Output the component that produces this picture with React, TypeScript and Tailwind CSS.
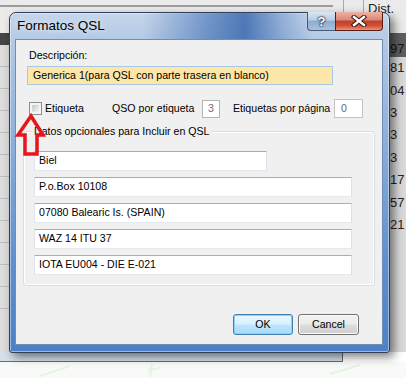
import React from "react";

// Win7 style text box
const Field = ({ value, className }: { value: string; className: string }) => (
  <div
    className={
      "h-[20px] flex items-center pl-[4px] bg-white border border-[#abadb3] border-l-[#e2e3ea] border-r-[#dbdfe6] border-b-[#e3e9ef] whitespace-nowrap " +
      className
    }
  >
    {value}
  </div>
);

const listRows = ["81", "04", "3", "3", "3", "17", "57", "21", "", "", "", ""];

const Backdrop = () => (
  <div className="flex flex-col w-[406px] h-[378px]">
    {/* toolbar + header */}
    <div className="flex h-[33px] bg-[#ebebeb]">
      <div className="w-[343px] pt-[5px]">
        <div className="h-[2px] w-[333px] bg-[#9c9c9c]" />
      </div>
      <div className="w-[20px] border-l border-[#a8a8a8]" />
      <div className="flex-1 border-l border-[#a8a8a8] pl-[4px] pt-[2px] text-[13px] leading-[14px] text-[#1d1d1d]">
        Dist.
      </div>
    </div>
    {/* list area */}
    <div className="flex h-[319px]">
      <div className="w-[390px] flex flex-col bg-[#dcdcdc]">
        <div className="h-[12px] bg-[#454545]" />
        {listRows.map((_, i) => (
          <div key={i} className="h-[22px] border-b border-[#bdbdbd]" />
        ))}
      </div>
      <div className="flex-1 flex flex-col bg-[#d9d9d9] text-[13px] text-[#2a2020]">
        <div className="h-[24px] bg-[#5e5e5e] flex items-end leading-[14px] pb-[1px] text-[#151515]">97</div>
        {listRows.map((v, i) => (
          <div key={i} className="h-[22.4px] flex items-center leading-[14px]">
            {v}
          </div>
        ))}
      </div>
    </div>
    {/* status strip */}
    <div className="h-[10px] w-[343px] bg-[#d6dfea] border-b border-r border-[#6c6c6c]" />
    <div className="flex-1 bg-[#f8faf7]">
      <svg width="406" height="16" className="block">
        <path d="M40 14 L70 4 M150 15 L152 2 M148 8 L160 6 M330 12 L360 3" stroke="#e8f2e4" strokeWidth="2" fill="none" />
      </svg>
    </div>
  </div>
);

const TitleBar = () => (
  <div className="flex h-[27px] bg-[linear-gradient(90deg,rgba(0,0,0,0)_0%,rgba(0,0,0,0)_35%,rgba(50,100,175,0.55)_52%,rgba(40,90,165,0.75)_62%,rgba(60,110,180,0.35)_72%,rgba(0,0,0,0)_80%)]">
    <div className="pl-[7px] flex items-center text-[13.5px] text-black [text-shadow:0_0_6px_rgba(255,255,255,0.9)]">
      Formatos QSL
    </div>
    <div className="ml-auto mr-[6px] -mt-px flex h-[19px] self-start">
      <div className="w-[28px] h-[19px] rounded-bl-[4px] border border-[#4a5a70] border-t-0 border-r-0 bg-[linear-gradient(180deg,#dbe6f2_0%,#b9cce3_45%,#8fabcf_52%,#a6c1e2_100%)] flex items-center justify-center text-white font-bold text-[13px] leading-none [text-shadow:0_0_1px_#1a2a40,0_0_2px_#1a2a40,0_0_2px_#1a2a40]">
        ?
      </div>
      <div className="w-[48px] h-[19px] rounded-br-[4px] border border-[#5a1e16] border-t-0 bg-[linear-gradient(180deg,#eeb3a5_0%,#db8a78_42%,#c4412c_52%,#cf4f38_75%,#e99272_100%)] flex items-center justify-center">
        <svg width="16" height="12" viewBox="0 0 16 12">
          <path d="M3 2 L13 10 M13 2 L3 10" stroke="#3a1410" strokeWidth="4.4" strokeLinecap="square" />
          <path d="M3 2 L13 10 M13 2 L3 10" stroke="#ffffff" strokeWidth="2.4" strokeLinecap="square" />
        </svg>
      </div>
    </div>
  </div>
);

const Button = ({ label, primary }: { label: string; primary?: boolean }) => (
  <div
    className={
      primary
        ? "w-[60px] h-[21px] rounded-[3px] border border-[#3c7fb1] bg-[linear-gradient(180deg,#eaf6fd_0%,#d9f0fc_48%,#bee6fd_52%,#a7d9f5_100%)] shadow-[inset_0_0_0_1px_#8fd3f8] flex items-center justify-center"
        : "w-[61px] h-[21px] rounded-[3px] border border-[#707070] bg-[linear-gradient(180deg,#f2f2f2_0%,#ebebeb_48%,#dddddd_52%,#cfcfcf_100%)] shadow-[inset_0_0_0_1px_#fcfcfc] flex items-center justify-center"
    }
  >
    {label}
  </div>
);

const Dialog = () => (
  <div className="absolute left-[9px] top-[12px] w-[381px] h-[341px] flex flex-col rounded-t-[7px] rounded-b-[3px] border border-[#2e3f57] bg-[linear-gradient(180deg,#c6d6ea_0px,#b2c8e4_30px,#8fb1dc_120px,#5f8fcd_250px,#4d80c6_100%)] shadow-[inset_0_0_0_1px_rgba(255,255,255,0.45),4px_4px_10px_rgba(0,0,0,0.5)]">
    <TitleBar />
    <div className="ml-[6px] mr-[7px] h-[304px] flex flex-col bg-[#f0f0f0] shadow-[0_0_0_1px_#6f8db5] text-[10.6px]">
      <div className="mt-[9px] ml-[13px] h-[13px] leading-[13px]">Descripción:</div>
      <div className="mt-[4px] ml-[11px] w-[306px] h-[19px] flex items-center pl-[5px] bg-[#fce6a8] border border-[#a9c8e6] whitespace-nowrap">
        Generica 1(para QSL con parte trasera en blanco)
      </div>
      <div className="mt-[14px] h-[19px] flex items-center">
        <div className="ml-[13px] w-[13px] h-[13px] border border-[#8e8f8f] bg-[#f4f4f4] p-[2px]">
          <div className="w-full h-full bg-[linear-gradient(135deg,#c8c8c8,#f3f3f3)]" />
        </div>
        <div className="ml-[3px] w-[67px]">Etiqueta</div>
        <div className="w-[90px]">QSO por etiqueta</div>
        <div className="w-[18px] h-[18px] pl-[5px] flex items-center bg-white border border-[#b5b5b5] text-[#6d6d6d]">3</div>
        <div className="ml-[13px] w-[101px]">Etiquetas por página</div>
        <div className="w-[29px] h-[19px] pl-[6px] flex items-center bg-white border border-[#c3c3c3] text-[#6d6d6d]">0</div>
      </div>
      <div className="relative mt-[13px] ml-[7px] w-[352px] h-[155px] rounded-[3px] border border-[#d5dfe5] shadow-[inset_0_0_0_1px_#ffffff]">
        <span className="absolute left-[8px] -top-[7px] px-[2px] bg-[#f0f0f0] leading-[13px]">
          Datos opcionales para Incluir en QSL
        </span>
        <div className="pt-[19px] pl-[10px] flex flex-col gap-[6px]">
          <Field value="Biel" className="w-[233px]" />
          <Field value="P.o.Box 10108" className="w-[318px]" />
          <Field value="07080 Balearic Is. (SPAIN)" className="w-[318px]" />
          <Field value="WAZ 14 ITU 37" className="w-[318px]" />
          <Field value="IOTA EU004 - DIE E-021" className="w-[318px]" />
        </div>
      </div>
      <div className="mt-[28px] pl-[217px] flex gap-[5px]">
        <Button label="OK" primary />
        <Button label="Cancel" />
      </div>
    </div>
  </div>
);

const RedArrow = () => (
  <svg className="absolute left-[14px] top-[112px]" width="34" height="46" viewBox="0 0 34 46">
    <polygon
      points="17,4 4,23 11,23 11,42 23,42 23,23 29,23"
      fill="none"
      stroke="#e5161e"
      strokeWidth="3.5"
      strokeLinejoin="miter"
    />
  </svg>
);

export default function App() {
  return (
    <div className="relative w-[406px] h-[378px] overflow-hidden font-['Liberation_Sans',Arial,sans-serif] text-[11px] text-black">
      <Backdrop />
      <Dialog />
      <RedArrow />
    </div>
  );
}
